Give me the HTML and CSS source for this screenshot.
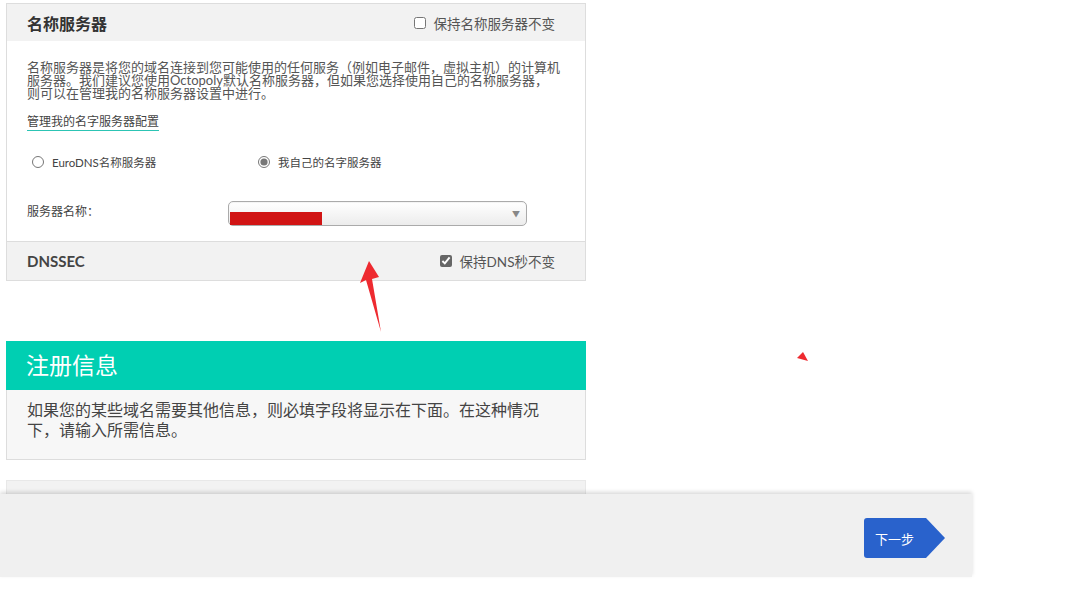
FILE: index.html
```html
<!DOCTYPE html>
<html lang="zh">
<head>
    <meta charset="UTF-8">
    <meta name="viewport" content="width=device-width, initial-scale=1.0">
    <title>名称服务器</title>
    <link rel="stylesheet" href="styles.css">
</head>
<body>
    <div class="page">
        <section class="panel">
            <div class="panel-head">
                <h2>名称服务器</h2>
                <label class="keep"><input type="checkbox">保持名称服务器不变</label>
            </div>
            <div class="panel-body">
                <p class="intro">名称服务器是将您的域名连接到您可能使用的任何服务（例如电子邮件，虚拟主机）的计算机<br>服务器。我们建议您使用Octopoly默认名称服务器，但如果您选择使用自己的名称服务器，<br>则可以在管理我的名称服务器设置中进行。</p>
                <a class="manage" href="#">管理我的名字服务器配置</a>
                <div class="radios">
                    <label><input type="radio" name="ns">EuroDNS名称服务器</label>
                    <label><input type="radio" name="ns" checked>我自己的名字服务器</label>
                </div>
                <div class="field-row">
                    <span>服务器名称：</span>
                    <div class="fake-select">
                        <span class="redacted"></span>
                        <span class="caret">&#9660;</span>
                    </div>
                </div>
            </div>
            <div class="panel-foot">
                <h3>DNSSEC</h3>
                <label class="keep"><input type="checkbox" checked>保持DNS秒不变</label>
            </div>
        </section>

        <section class="reg">
            <h2>注册信息</h2>
            <p>如果您的某些域名需要其他信息，则必填字段将显示在下面。在这种情况<br>下，请输入所需信息。</p>
        </section>

        <section class="panel next-panel"></section>
    </div>

    <svg class="mark-arrow" width="40" height="90" viewBox="355 255 40 90">
        <polygon points="369,261 360,283 366,280 381,332 372,279 379,277" fill="#ee2a30"/>
    </svg>
    <svg class="mark-tri" width="14" height="12" viewBox="796 351 14 12">
        <polygon points="803,352 797,358 808,361" fill="#ee2a30"/>
    </svg>

    <div class="actions">
        <button class="next">下一步</button>
    </div>
</body>
</html>
```

FILE: styles.css
```css
body {
    margin: 0;
    font-family: "Lato", "Noto Sans CJK SC", sans-serif;
    color: #555;
    background: #fff;
}
.page {
    width: 580px;
    padding: 3px 0 0 6px;
}
.panel {
    border: 1px solid #ddd;
    background: #fff;
}
.panel-head, .panel-foot {
    display: flex;
    align-items: center;
    justify-content: space-between;
    background: #f2f2f2;
    padding: 0 30px 0 20px;
}
.panel-head {
    height: 37px;
}
.panel-head h2 {
    margin: 0;
    font-size: 16px;
    font-weight: bold;
    color: #333;
}
.keep {
    display: flex;
    align-items: center;
    font-size: 13.5px;
    color: #555;
}
.keep input {
    margin: 0 8px 0 0;
    width: 12px;
    height: 12px;
    accent-color: #666;
}
.panel-body {
    padding: 20px 20px 15px 20px;
}
.intro {
    margin: 0;
    font-size: 13px;
    line-height: 13px;
    color: #555;
}
.manage {
    display: inline-block;
    margin-top: 14px;
    font-size: 12px;
    line-height: 16px;
    color: #444;
    text-decoration: none;
    border-bottom: 1px solid #2cc4b4;
}
.radios {
    display: grid;
    grid-template-columns: 226px 1fr;
    margin-top: 23px;
    font-size: 11.5px;
    color: #444;
    height: 16px;
    align-items: center;
}
.radios label {
    display: flex;
    align-items: center;
}
.radios input {
    margin: 0 8px 0 5px;
    width: 12px;
    height: 12px;
    accent-color: #777;
}
.field-row {
    display: grid;
    grid-template-columns: 201px 299px;
    align-items: center;
    margin-top: 31px;
    font-size: 12px;
    color: #444;
}
.field-row > span {
    margin-top: -6px;
}
.fake-select {
    position: relative;
    height: 23px;
    border: 1px solid #aaa;
    border-radius: 5px;
    background: linear-gradient(#fff, #ececec);
    box-shadow: inset 0 1px 1px rgba(0, 0, 0, 0.05);
}
.redacted {
    display: block;
    width: 92px;
    height: 13px;
    margin: 10px 0 0 1px;
    background: #d11414;
}
.caret {
    position: absolute;
    right: 6px;
    top: 6px;
    font-size: 8px;
    color: #888;
}
.panel-foot {
    height: 38px;
    border-top: 1px solid #ddd;
}
.panel-foot h3 {
    margin: 0;
    font-size: 15px;
    font-weight: bold;
    color: #444;
}
.reg {
    margin-top: 60px;
}
.reg h2 {
    margin: 0;
    height: 49px;
    line-height: 49px;
    padding-left: 20px;
    background: #00cfb2;
    color: #fff;
    font-size: 23px;
    font-weight: normal;
}
.reg p {
    margin: 0;
    height: 59px;
    padding: 10px 20px 0 20px;
    border: 1px solid #ddd;
    border-top: none;
    background: #f7f7f7;
    color: #444;
    font-size: 16px;
    line-height: 20px;
}
.next-panel {
    margin-top: 20px;
    height: 60px;
    background: #f2f2f2;
    border-color: #e8e8e8;
}
.mark-arrow {
    position: absolute;
    left: 355px;
    top: 255px;
}
.mark-tri {
    position: absolute;
    left: 796px;
    top: 351px;
}
.actions {
    position: fixed;
    left: 0;
    bottom: 24px;
    width: 972px;
    height: 83px;
    background: #f0f0f0;
    box-shadow: 0 -2px 4px rgba(0, 0, 0, 0.15);
    display: flex;
    justify-content: flex-end;
    align-items: center;
    padding-top: 5px;
    box-sizing: border-box;
}
.next {
    width: 81px;
    height: 40px;
    margin-right: 27px;
    padding: 0 0 0 11px;
    text-align: left;
    border: none;
    border-radius: 3px;
    background: #2962cc;
    color: #fff;
    font-family: "Noto Sans CJK SC", sans-serif;
    font-size: 13px;
    clip-path: polygon(0 0, 62px 0, 100% 50%, 62px 100%, 0 100%);
}
```
